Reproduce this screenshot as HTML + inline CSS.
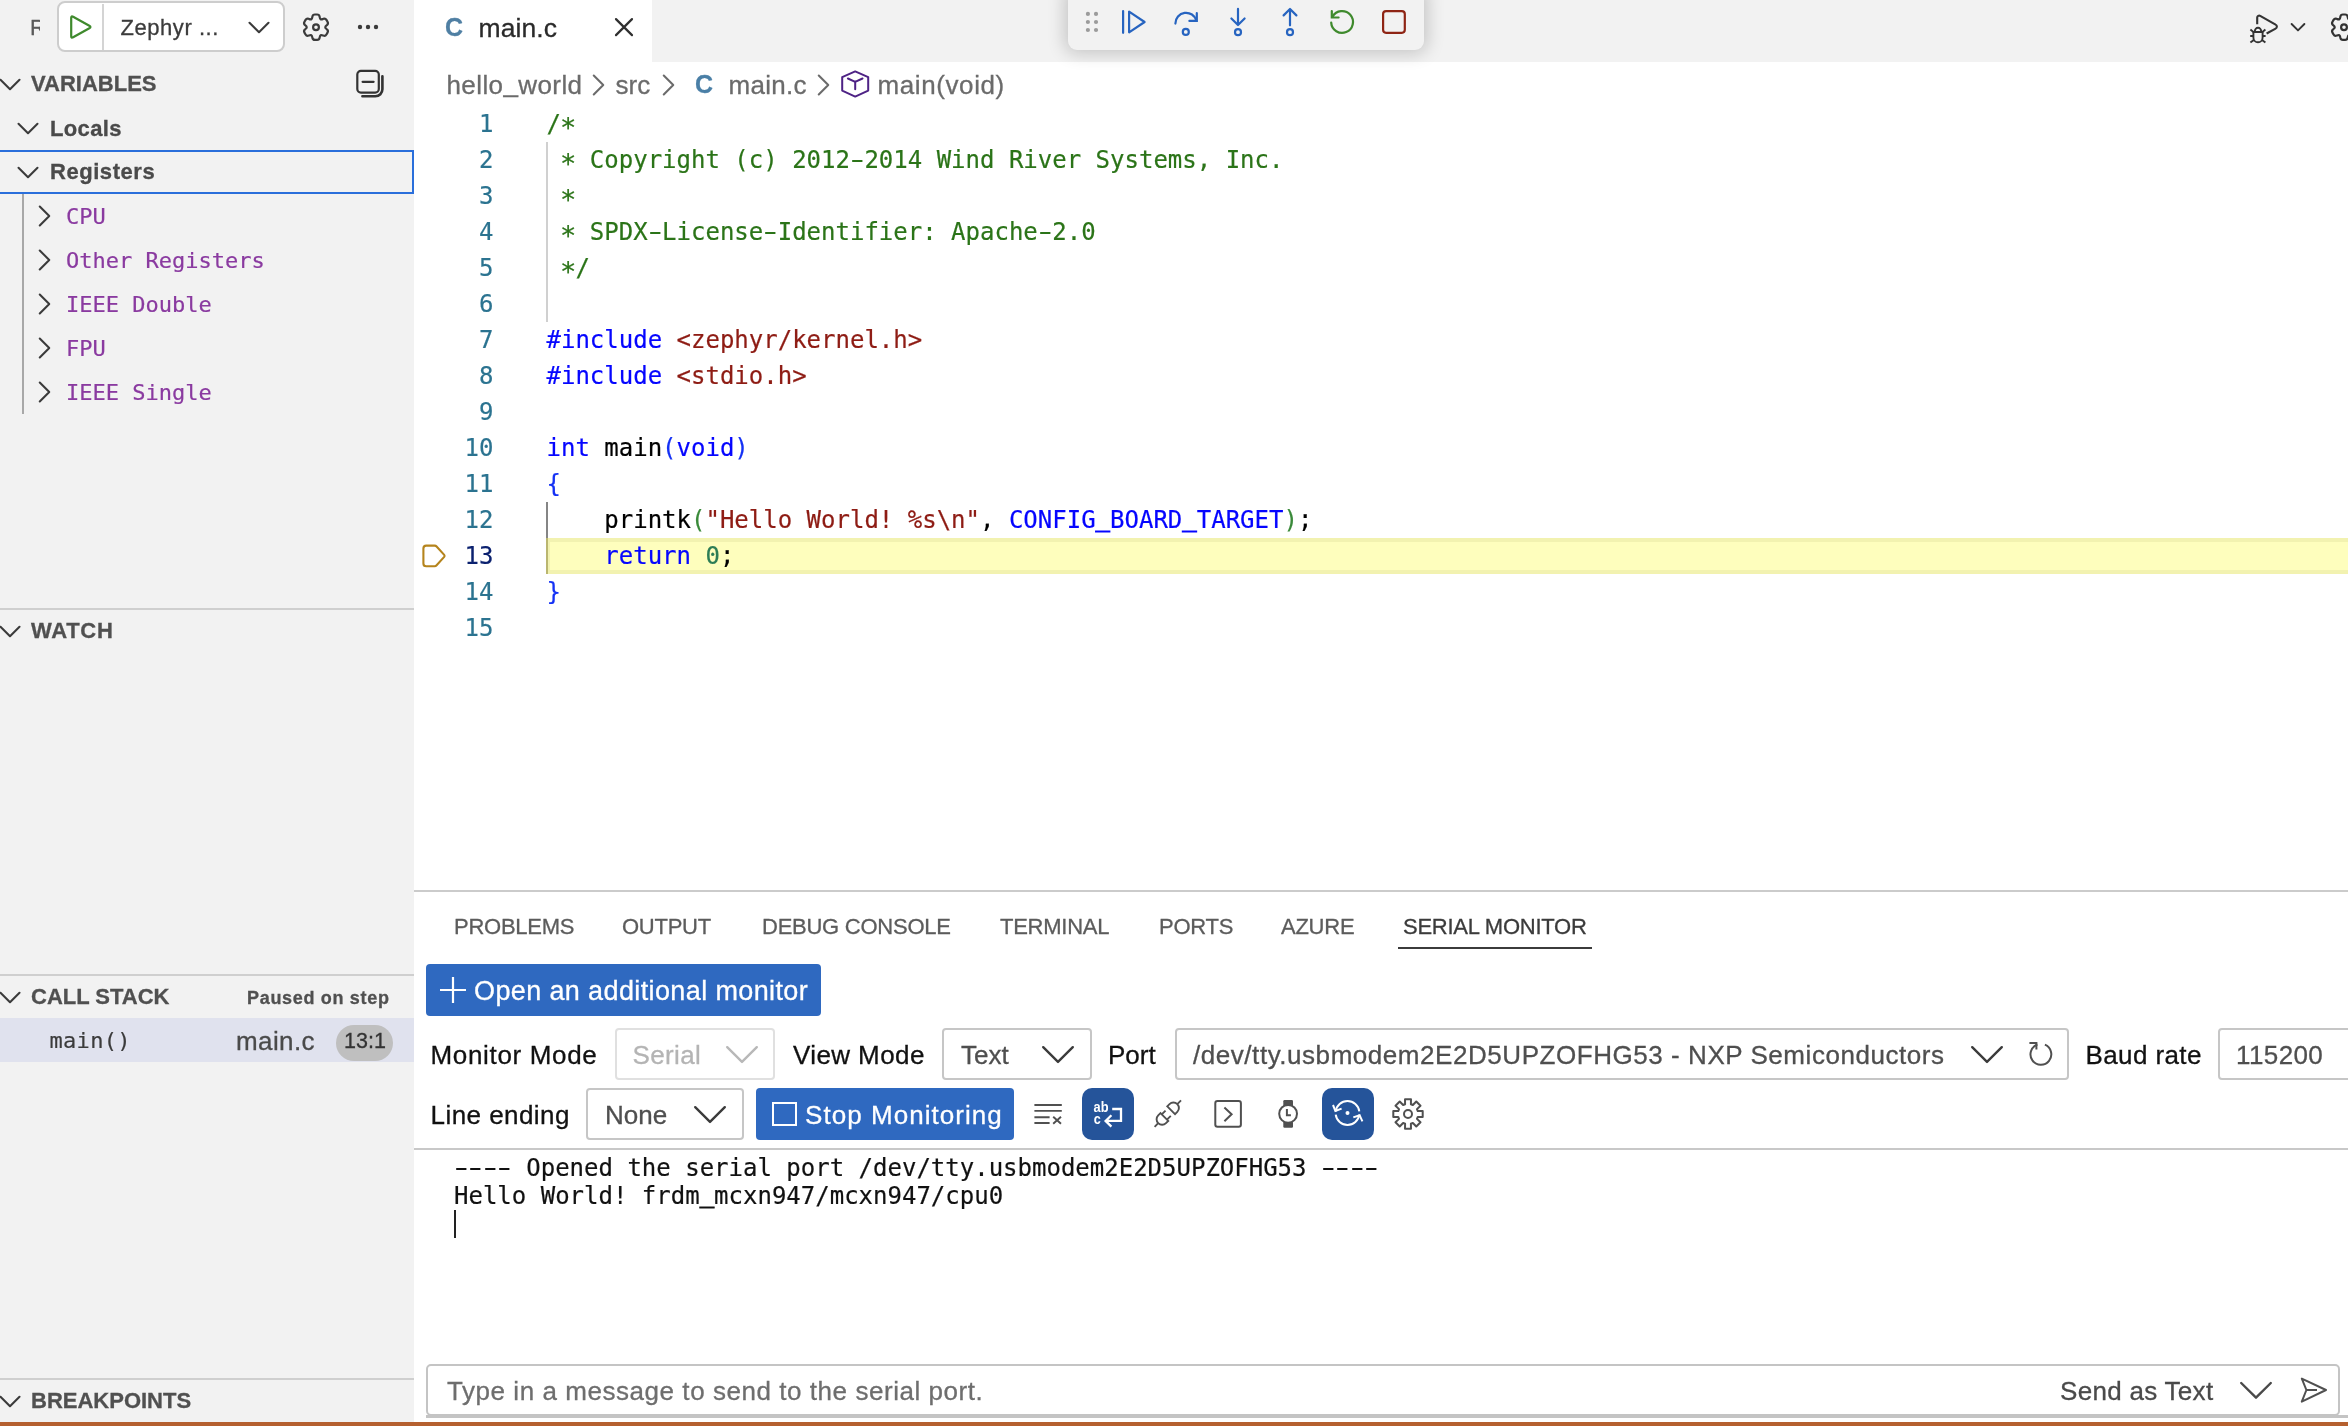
<!DOCTYPE html>
<html lang="en">
<head>
<meta charset="utf-8">
<title>main.c - hello_world - Visual Studio Code</title>
<style>
*{box-sizing:border-box;margin:0;padding:0}
html,body{width:2348px;height:1426px;overflow:hidden;background:#fff}
body{position:relative;font-family:"Liberation Sans",sans-serif;font-size:26px;color:#3b3b3b;-webkit-text-stroke:.3px}
.abs{position:absolute}
.mono{font-family:"DejaVu Sans Mono","Liberation Mono",monospace;-webkit-text-stroke:.2px}
svg{position:absolute;overflow:visible}
.t{position:absolute;white-space:pre;line-height:1}
/* ---------- sidebar ---------- */
#sidebar{position:absolute;left:0;top:0;width:414px;height:1422px;background:#f2f2f2;overflow:hidden}
.hdr{position:absolute;left:31px;font-weight:bold;font-size:22px;color:#505050;line-height:44px;height:44px;white-space:pre}
.sep{position:absolute;left:0;width:414px;height:2px;background:#cfcfcf}
.sub{position:absolute;left:51px;font-weight:bold;font-size:22px;color:#4a4a4a;line-height:44px;height:44px;white-space:pre}
.reg{position:absolute;margin-top:.5px;left:66px;font-size:22px;color:#8a3aa0;line-height:44px;height:44px;white-space:pre}
/* ---------- editor ---------- */
#tabs{position:absolute;left:414px;top:0;width:1934px;height:62px;background:#f2f2f2}
#tab{position:absolute;left:0;top:0;width:238px;height:62px;background:#fff}
#editor{position:absolute;left:414px;top:106px;width:1934px;height:784px;background:#fff;overflow:hidden}
.ln{position:absolute;left:0;width:79.5px;text-align:right;font-size:24px;line-height:36px;height:36px;color:#2b7390}
.cl{position:absolute;left:132.5px;font-size:24px;line-height:36px;height:36px;white-space:pre;color:#000}
.as{display:inline-block;transform:translateY(4.4px) scale(1.13)}.hy{display:inline-block;transform:scaleX(1.62)}.us{display:inline-block;transform:translateY(-2.4px);-webkit-text-stroke:.9px}
.c{color:#2b7418}.k{color:#0505ff}.s{color:#8e1c14}.b1{color:#1431f5}.b2{color:#3a8a3a}.n{color:#2c7d55}.m{color:#0505ff}
/* ---------- panel ---------- */
#panel{position:absolute;left:414px;top:890px;width:1934px;height:532px;background:#fff;border-top:2px solid #cbcbcb;overflow:hidden}
.ptab{position:absolute;margin-top:.5px;top:22px;font-size:22px;letter-spacing:-.25px;line-height:28px;color:#5c5c5c;white-space:pre}
.lbl{position:absolute;font-size:26px;line-height:32px;color:#111;white-space:pre}
.sel{position:absolute;height:52px;border:2px solid #c6c6c6;border-radius:4px;background:#fff}
.sel .v{position:absolute;left:17px;top:9px;font-size:26px;line-height:32px;color:#4f4f4f;white-space:pre}
.btn{position:absolute;background:#2f69c0;border-radius:4px;color:#fff}
.tog{position:absolute;width:52px;height:52px;border-radius:10px;background:#25549a}
.out{position:absolute;left:40px;font-size:24px;line-height:28px;height:28px;color:#111;white-space:pre}
#status{position:absolute;left:0;top:1422px;width:2348px;height:4px;background:#b5602f}
</style>
</head>
<body>
<div id="root" style="position:absolute;left:0;top:0;width:2348px;height:1426px;will-change:transform">
<!-- SIDEBAR -->
<div id="sidebar">
<div class="t" style="left:30px;top:17px;width:10px;overflow:hidden;font-size:22px;color:#5a5a5a">R</div>
<div class="abs" style="left:57px;top:1px;width:228px;height:51px;border:2px solid #cdcdcd;border-radius:8px;background:#fff"></div>
<div class="abs" style="left:102px;top:4px;width:2px;height:46px;background:#d4d4d4"></div>
<svg style="left:0;top:0" width="1" height="1"><path d="M71.20 17.80Q71.20 15.60 73.12 16.67L89.33 25.73Q91.60 27.00 89.33 28.27L73.12 37.33Q71.20 38.40 71.20 36.20Z" fill="none" stroke="#3f8a2d" stroke-width="2.2" stroke-linejoin="round"/></svg>
<div class="t" style="left:120.5px;top:16.5px;font-size:22px;letter-spacing:0.55px;color:#3b3b3b">Zephyr ...</div>
<svg class="abs" style="left:0;top:0" width="1" height="1"><path d="M249.5 22.75L259 32.25L268.5 22.75" fill="none" stroke="#3b3b3b" stroke-width="2.05" stroke-linecap="round" stroke-linejoin="round"/></svg>
<svg class="abs" style="left:0;top:0" width="1" height="1"><path d="M0.5 79.75L10 89.25L19.5 79.75" fill="none" stroke="#3b3b3b" stroke-width="2.05" stroke-linecap="round" stroke-linejoin="round"/></svg>
<div class="hdr" style="top:62px">VARIABLES</div>
<svg style="left:0px;top:0px" width="1" height="1"><path d="M320.63 19.18Q319.93 18.77 319.63 16.79L319.61 16.64Q319.28 14.52 317.08 14.52L314.92 14.52Q312.72 14.52 312.39 16.64L312.37 16.79Q312.07 18.77 311.37 19.18L311.37 19.18Q310.67 19.58 308.80 18.86L308.66 18.80Q306.66 18.02 305.56 19.92L304.48 21.79Q303.38 23.70 305.06 25.04L305.17 25.14Q306.74 26.39 306.74 27.20L306.74 27.20Q306.74 28.01 305.17 29.26L305.06 29.36Q303.38 30.70 304.48 32.61L305.56 34.48Q306.66 36.38 308.66 35.60L308.80 35.54Q310.67 34.82 311.37 35.22L311.37 35.22Q312.07 35.63 312.37 37.61L312.39 37.76Q312.72 39.88 314.92 39.88L317.08 39.88Q319.28 39.88 319.61 37.76L319.63 37.61Q319.93 35.63 320.63 35.22L320.63 35.22Q321.33 34.82 323.20 35.54L323.34 35.60Q325.34 36.38 326.44 34.48L327.52 32.61Q328.62 30.70 326.94 29.36L326.83 29.26Q325.26 28.01 325.26 27.20L325.26 27.20Q325.26 26.39 326.83 25.14L326.94 25.04Q328.62 23.70 327.52 21.79L326.44 19.92Q325.34 18.02 323.34 18.80L323.20 18.86Q321.33 19.58 320.63 19.18Z" fill="none" stroke="#3b3b3b" stroke-width="2.2" stroke-linejoin="round"/><circle cx="316" cy="27.2" r="2.9" fill="none" stroke="#3b3b3b" stroke-width="2.2"/></svg>
<svg style="left:0px;top:0px" width="1" height="1"><circle cx="360" cy="27" r="2.2" fill="#3b3b3b"/><circle cx="368" cy="27" r="2.2" fill="#3b3b3b"/><circle cx="376" cy="27" r="2.2" fill="#3b3b3b"/></svg>
<svg style="left:0px;top:0px" width="1" height="1"><rect x="357.3" y="70.9" width="21.5" height="21.7" rx="3.6" fill="none" stroke="#333" stroke-width="2.2"/><path d="M362.6 81.8H373.6" stroke="#333" stroke-width="2.2" stroke-linecap="round" fill="none"/><path d="M382.4 76.2V89.3A7 7 0 0 1 375.4 96.3H362.4" stroke="#333" stroke-width="2.6" stroke-linecap="round" fill="none"/></svg>
<svg class="abs" style="left:0;top:0" width="1" height="1"><path d="M18.5 123.75L28 133.25L37.5 123.75" fill="none" stroke="#3b3b3b" stroke-width="2.05" stroke-linecap="round" stroke-linejoin="round"/></svg>
<div class="sub" style="top:107px;left:50px;letter-spacing:.35px">Locals</div>
<div class="abs" style="left:-2px;top:150px;width:416px;height:44px;border:2px solid #2a6fdb"></div>
<svg class="abs" style="left:0;top:0" width="1" height="1"><path d="M18.5 167.75L28 177.25L37.5 167.75" fill="none" stroke="#3b3b3b" stroke-width="2.05" stroke-linecap="round" stroke-linejoin="round"/></svg>
<div class="sub" style="top:150px;left:50px;letter-spacing:.55px">Registers</div>
<div class="abs" style="left:22px;top:194px;width:2px;height:220px;background:#a8a8a8"></div>
<svg class="abs" style="left:0;top:0" width="1" height="1"><path d="M39.75 206.5L49.25 216L39.75 225.5" fill="none" stroke="#3b3b3b" stroke-width="2.05" stroke-linecap="round" stroke-linejoin="round"/></svg>
<div class="reg mono" style="top:194px">CPU</div>
<svg class="abs" style="left:0;top:0" width="1" height="1"><path d="M39.75 250.5L49.25 260L39.75 269.5" fill="none" stroke="#3b3b3b" stroke-width="2.05" stroke-linecap="round" stroke-linejoin="round"/></svg>
<div class="reg mono" style="top:238px">Other Registers</div>
<svg class="abs" style="left:0;top:0" width="1" height="1"><path d="M39.75 294.5L49.25 304L39.75 313.5" fill="none" stroke="#3b3b3b" stroke-width="2.05" stroke-linecap="round" stroke-linejoin="round"/></svg>
<div class="reg mono" style="top:282px">IEEE Double</div>
<svg class="abs" style="left:0;top:0" width="1" height="1"><path d="M39.75 338.5L49.25 348L39.75 357.5" fill="none" stroke="#3b3b3b" stroke-width="2.05" stroke-linecap="round" stroke-linejoin="round"/></svg>
<div class="reg mono" style="top:326px">FPU</div>
<svg class="abs" style="left:0;top:0" width="1" height="1"><path d="M39.75 382.5L49.25 392L39.75 401.5" fill="none" stroke="#3b3b3b" stroke-width="2.05" stroke-linecap="round" stroke-linejoin="round"/></svg>
<div class="reg mono" style="top:370px">IEEE Single</div>
<div class="sep" style="top:608px"></div>
<svg class="abs" style="left:0;top:0" width="1" height="1"><path d="M0.5 626.75L10 636.25L19.5 626.75" fill="none" stroke="#3b3b3b" stroke-width="2.05" stroke-linecap="round" stroke-linejoin="round"/></svg>
<div class="hdr" style="top:609px;letter-spacing:.7px">WATCH</div>
<div class="sep" style="top:974px"></div>
<svg class="abs" style="left:0;top:0" width="1" height="1"><path d="M0.5 992.75L10 1002.25L19.5 992.75" fill="none" stroke="#3b3b3b" stroke-width="2.05" stroke-linecap="round" stroke-linejoin="round"/></svg>
<div class="hdr" style="top:975px">CALL STACK</div>
<div class="t" style="left:247px;top:989px;font-size:18px;letter-spacing:.68px;font-weight:bold;color:#505050">Paused on step</div>
<div class="abs" style="left:0;top:1018px;width:414px;height:44px;background:#e0e2ee"></div>
<div class="t mono" style="left:49.5px;top:1030px;font-size:22px;letter-spacing:.3px;color:#3b3b3b">main()</div>
<div class="t" style="left:236px;top:1028px;font-size:26px;letter-spacing:.4px;color:#4a4a4a">main.c</div>
<div class="abs" style="left:336px;top:1025px;width:57px;height:36px;border-radius:18px;background:#bfbfbf"></div>
<div class="t" style="left:344px;top:1031px;font-size:21.5px;color:#333">13:1</div>
<div class="sep" style="top:1378px"></div>
<svg class="abs" style="left:0;top:0" width="1" height="1"><path d="M0.5 1396.75L10 1406.25L19.5 1396.75" fill="none" stroke="#3b3b3b" stroke-width="2.05" stroke-linecap="round" stroke-linejoin="round"/></svg>
<div class="hdr" style="top:1379px">BREAKPOINTS</div>
</div>
<!-- TABS -->
<div id="tabs">
<svg style="left:-414px;top:0px" width="1" height="1"><path d="M2257.2 24.3V17.6A2 2 0 0 1 2260.2 15.9L2275.6 24.6A2.2 2.2 0 0 1 2275.6 28.6L2266.6 33.5" stroke="#333" stroke-width="2.1" stroke-linecap="butt" stroke-linejoin="round" fill="none"/><path d="M2253.4 32H2262.6V37.4A4.6 4.9 0 0 1 2253.4 37.4Z" stroke="#333" stroke-width="1.9" stroke-linejoin="round" fill="none"/><path d="M2254.8 31.6A3.2 3.9 0 0 1 2261.2 31.6" stroke="#333" stroke-width="1.9" fill="none"/><path d="M2250.4 29.6L2253.4 32M2265.4 29.6L2262.4 32M2250.2 36H2253.4M2262.4 36H2265.6M2250.4 42.6L2253.8 40M2265.4 42.6L2262 40" stroke="#333" stroke-width="1.9" fill="none"/></svg>
<svg style="left:-414px;top:0px" width="1" height="1"><path d="M2291.6 24L2298 30.4L2304.4 24" stroke="#333" stroke-width="1.9" stroke-linecap="round" stroke-linejoin="round" fill="none"/></svg>
<svg style="left:-414px;top:0px" width="1" height="1"><path d="M2348.63 19.18Q2347.93 18.77 2347.63 16.79L2347.61 16.64Q2347.28 14.52 2345.08 14.52L2342.92 14.52Q2340.72 14.52 2340.39 16.64L2340.37 16.79Q2340.07 18.77 2339.37 19.18L2339.37 19.18Q2338.67 19.58 2336.80 18.86L2336.66 18.80Q2334.66 18.02 2333.56 19.92L2332.48 21.79Q2331.38 23.70 2333.06 25.04L2333.17 25.14Q2334.74 26.39 2334.74 27.20L2334.74 27.20Q2334.74 28.01 2333.17 29.26L2333.06 29.36Q2331.38 30.70 2332.48 32.61L2333.56 34.48Q2334.66 36.38 2336.66 35.60L2336.80 35.54Q2338.67 34.82 2339.37 35.22L2339.37 35.22Q2340.07 35.63 2340.37 37.61L2340.39 37.76Q2340.72 39.88 2342.92 39.88L2345.08 39.88Q2347.28 39.88 2347.61 37.76L2347.63 37.61Q2347.93 35.63 2348.63 35.22L2348.63 35.22Q2349.33 34.82 2351.20 35.54L2351.34 35.60Q2353.34 36.38 2354.44 34.48L2355.52 32.61Q2356.62 30.70 2354.94 29.36L2354.83 29.26Q2353.26 28.01 2353.26 27.20L2353.26 27.20Q2353.26 26.39 2354.83 25.14L2354.94 25.04Q2356.62 23.70 2355.52 21.79L2354.44 19.92Q2353.34 18.02 2351.34 18.80L2351.20 18.86Q2349.33 19.58 2348.63 19.18Z" fill="none" stroke="#333" stroke-width="2.2" stroke-linejoin="round"/><circle cx="2344" cy="27.2" r="2.9" fill="none" stroke="#333" stroke-width="2.2"/></svg><div id="tab">
<div class="t" style="left:31px;top:14.5px;font-size:25px;font-weight:bold;color:#4f7fa3">C</div>
<div class="t" style="left:64.5px;top:14.5px;font-size:26.5px;letter-spacing:.1px;color:#2a2a2a">main.c</div>
<svg style="left:0;top:0" width="1" height="1"><path d="M202 19.1L218 35.1M218 19.1L202 35.1" fill="none" stroke="#2f2f2f" stroke-width="2.2" stroke-linecap="round"/></svg>
</div></div>
<!-- BREADCRUMBS -->
<div id="crumbs">
<div class="t" style="left:446.5px;top:72px;font-size:26px;letter-spacing:.4px;color:#6b6b6b">hello<span style="display:inline-block;transform:translateY(-2.4px)">_</span>world</div>
<svg class="abs" style="left:0;top:0" width="1" height="1"><path d="M593.75 75.5L603.25 85L593.75 94.5" fill="none" stroke="#6b6b6b" stroke-width="2.05" stroke-linecap="round" stroke-linejoin="round"/></svg>
<div class="t" style="left:615.5px;top:72px;font-size:26px;color:#6b6b6b">src</div>
<svg class="abs" style="left:0;top:0" width="1" height="1"><path d="M663.75 75.5L673.25 85L663.75 94.5" fill="none" stroke="#6b6b6b" stroke-width="2.05" stroke-linecap="round" stroke-linejoin="round"/></svg>
<div class="t" style="left:695px;top:72px;font-size:25px;font-weight:bold;color:#4a7fa6">C</div>
<div class="t" style="left:728.5px;top:72px;font-size:26px;letter-spacing:.3px;color:#6b6b6b">main.c</div>
<svg class="abs" style="left:0;top:0" width="1" height="1"><path d="M818.75 75.5L828.25 85L818.75 94.5" fill="none" stroke="#6b6b6b" stroke-width="2.05" stroke-linecap="round" stroke-linejoin="round"/></svg>
<div class="t" style="left:877.5px;top:72px;font-size:26px;letter-spacing:.6px;color:#6b6b6b">main(void)</div>
</div>
<!-- EDITOR -->
<div id="editor">
<div class="abs" style="left:132px;top:432px;width:1810px;height:36px;background:#fefebd;border:4px solid #f2f2b0"></div>
<div class="abs" style="left:132px;top:36px;width:2px;height:180px;background:#d0d0d0"></div>
<div class="abs" style="left:132px;top:396px;width:2px;height:36px;background:#858585"></div><div class="abs" style="left:132px;top:432px;width:2px;height:36px;background:#bab670"></div>
<div class="ln mono" style="top:0px">1</div><div class="cl mono" style="top:0px"><span class="c">/<span class="as">*</span></span></div>
<div class="ln mono" style="top:36px">2</div><div class="cl mono" style="top:36px"><span class="c"> <span class="as">*</span> Copyright (c) 2012<span class="hy">-</span>2014 Wind River Systems, Inc.</span></div>
<div class="ln mono" style="top:72px">3</div><div class="cl mono" style="top:72px"><span class="c"> <span class="as">*</span></span></div>
<div class="ln mono" style="top:108px">4</div><div class="cl mono" style="top:108px"><span class="c"> <span class="as">*</span> SPDX<span class="hy">-</span>License<span class="hy">-</span>Identifier: Apache<span class="hy">-</span>2.0</span></div>
<div class="ln mono" style="top:144px">5</div><div class="cl mono" style="top:144px"><span class="c"> <span class="as">*</span>/</span></div>
<div class="ln mono" style="top:180px">6</div><div class="cl mono" style="top:180px"></div>
<div class="ln mono" style="top:216px">7</div><div class="cl mono" style="top:216px"><span class="k">#include</span> <span class="s">&lt;zephyr/kernel.h&gt;</span></div>
<div class="ln mono" style="top:252px">8</div><div class="cl mono" style="top:252px"><span class="k">#include</span> <span class="s">&lt;stdio.h&gt;</span></div>
<div class="ln mono" style="top:288px">9</div><div class="cl mono" style="top:288px"></div>
<div class="ln mono" style="top:324px">10</div><div class="cl mono" style="top:324px"><span class="k">int</span> main<span class="b1">(</span><span class="k">void</span><span class="b1">)</span></div>
<div class="ln mono" style="top:360px">11</div><div class="cl mono" style="top:360px"><span class="b1">{</span></div>
<div class="ln mono" style="top:396px">12</div><div class="cl mono" style="top:396px">    printk<span class="b2">(</span><span class="s">"Hello World! %s\n"</span>, <span class="m">CONFIG<span class="us">_</span>BOARD<span class="us">_</span>TARGET</span><span class="b2">)</span>;</div>
<div class="ln mono" style="top:432px;color:#0b216f">13</div><div class="cl mono" style="top:432px">    <span class="k">return</span> <span class="n">0</span>;</div>
<div class="ln mono" style="top:468px">14</div><div class="cl mono" style="top:468px"><span class="b1">}</span></div>
<div class="ln mono" style="top:504px">15</div><div class="cl mono" style="top:504px"></div>
</div>
<div id="glyphs">
<svg style="left:0px;top:0px" width="1" height="1"><path d="M426.2 545.6H434.6Q435.8 545.6 436.6 546.5L444.2 554.9Q445 555.9 444.2 556.9L436.6 565.3Q435.8 566.2 434.6 566.2H426.2Q423.4 566.2 423.4 563.4V548.4Q423.4 545.6 426.2 545.6Z" fill="none" stroke="#b5841c" stroke-width="2.1" stroke-linejoin="round"/></svg>
<svg style="left:0px;top:0px" width="1" height="1"><path d="M855.2 71.4L868.2 77.1V90.6L855.2 96.6L842.2 90.6V77.1Z" fill="none" stroke="#4e2285" stroke-width="2" stroke-linejoin="round"/><path d="M847.9 78.5L855.2 81.8L862.5 78.5M855.2 81.8V89.3" fill="none" stroke="#4e2285" stroke-width="2" stroke-linecap="round" stroke-linejoin="round"/></svg>
</div>
<!-- DEBUG TOOLBAR -->
<div id="dbg">
<div class="abs" style="left:1068px;top:-12px;width:356px;height:62px;background:#f2f2f2;border-radius:9px;box-shadow:0 0 18px 3px rgba(0,0,0,.2)"></div>
<svg style="left:0px;top:0px" width="1" height="1"><circle cx="1087.9" cy="13.9" r="2.1" fill="#9b9b9b"/><circle cx="1087.9" cy="22" r="2.1" fill="#9b9b9b"/><circle cx="1087.9" cy="30" r="2.1" fill="#9b9b9b"/><circle cx="1096" cy="13.9" r="2.1" fill="#9b9b9b"/><circle cx="1096" cy="22" r="2.1" fill="#9b9b9b"/><circle cx="1096" cy="30" r="2.1" fill="#9b9b9b"/></svg>
<svg style="left:0px;top:0px" width="1" height="1"><path d="M1123.1 11.1V32.8" stroke="#2764c0" stroke-width="2.2" stroke-linecap="round" fill="none"/><path d="M1129.1 11.6V32.3L1144.6 22Z" stroke="#2764c0" stroke-width="2.2" stroke-linejoin="round" fill="none"/></svg>
<svg style="left:0px;top:0px" width="1" height="1"><path d="M1175.4 23.6A10.7 10.7 0 0 1 1196.4 20.6" stroke="#2764c0" stroke-width="2.2" stroke-linecap="round" fill="none"/><path d="M1196.8 13.2V20.9H1189.4" stroke="#2764c0" stroke-width="2.2" stroke-linecap="round" stroke-linejoin="miter" fill="none"/><circle cx="1185.8" cy="31.9" r="3" stroke="#2764c0" stroke-width="2.2" fill="none"/></svg>
<svg style="left:0px;top:0px" width="1" height="1"><path d="M1238 8.9V24.6M1231.4 18.5L1238 25L1244.6 18.5" stroke="#2764c0" stroke-width="2.2" stroke-linecap="round" stroke-linejoin="round" fill="none"/><circle cx="1238" cy="32.2" r="3" stroke="#2764c0" stroke-width="2.2" fill="none"/></svg>
<svg style="left:0px;top:0px" width="1" height="1"><path d="M1290 9.5V25.3M1283.6 15.4L1290 9L1296.4 15.4" stroke="#2764c0" stroke-width="2.2" stroke-linecap="round" stroke-linejoin="round" fill="none"/><circle cx="1290" cy="32.2" r="3" stroke="#2764c0" stroke-width="2.2" fill="none"/></svg>
<svg style="left:0px;top:0px" width="1" height="1"><path d="M1332.6 16.6A10.9 10.9 0 1 1 1331.2 22.6" stroke="#3f8a2d" stroke-width="2.2" stroke-linecap="round" fill="none"/><path d="M1331.8 11V17.5H1338.6" stroke="#3f8a2d" stroke-width="2.2" stroke-linecap="round" stroke-linejoin="miter" fill="none"/></svg>
<svg style="left:0px;top:0px" width="1" height="1"><rect x="1383.1" y="11.1" width="21.7" height="21.7" rx="3" fill="none" stroke="#8e2414" stroke-width="2.2"/></svg>
</div>
<!-- PANEL -->
<div id="panel">
<div class="ptab" id="pt0" style="left:40px;top:20px;color:#5c5c5c">PROBLEMS</div>
<div class="ptab" id="pt1" style="left:208px;top:20px;color:#5c5c5c">OUTPUT</div>
<div class="ptab" id="pt2" style="left:348px;top:20px;color:#5c5c5c">DEBUG CONSOLE</div>
<div class="ptab" id="pt3" style="left:586px;top:20px;color:#5c5c5c">TERMINAL</div>
<div class="ptab" id="pt4" style="left:745px;top:20px;color:#5c5c5c">PORTS</div>
<div class="ptab" id="pt5" style="left:867px;top:20px;color:#5c5c5c">AZURE</div>
<div class="ptab" id="pt6" style="left:989px;top:20px;color:#3b3b3b">SERIAL MONITOR</div>
<div class="abs" style="left:984px;top:55px;width:194px;height:2px;background:#3b3b3b"></div>
<div class="btn" style="left:12px;top:72px;width:395px;height:52px"></div>
<svg style="left:-414px;top:-892px" width="1" height="1"><path d="M440 990H466M453 977V1003" stroke="#fff" stroke-width="2.2" fill="none"/></svg>
<div class="t" id="oam" style="left:60px;top:86px;font-size:27px;letter-spacing:.38px;color:#fff">Open an additional monitor</div>
<div class="lbl" id="l1" style="letter-spacing:.67px;left:16.5px;top:147px">Monitor Mode</div>
<div class="sel" style="left:201px;top:136px;width:160px;border-color:#e0e0e0"><div class="v" id="v1" style="left:15.5px;letter-spacing:.35px;color:#b4b4b4">Serial</div></div>
<svg style="left:0;top:0" width="1" height="1"><path d="M313.2 155.2L328 169.9L342.8 155.2" fill="none" stroke="#b8b8b8" stroke-width="2.4" stroke-linecap="round" stroke-linejoin="round"/></svg>
<div class="lbl" id="l2" style="letter-spacing:.4px;left:379px;top:147px">View Mode</div>
<div class="sel" style="left:528px;top:136px;width:150px"><div class="v" id="v2">Text</div></div>
<svg style="left:0;top:0" width="1" height="1"><path d="M629.2 155.2L644 169.9L658.8 155.2" fill="none" stroke="#3b3b3b" stroke-width="2.4" stroke-linecap="round" stroke-linejoin="round"/></svg>
<div class="lbl" id="l3" style="left:694px;top:147px">Port</div>
<div class="sel" style="left:761px;top:136px;width:894px"><div class="v" id="v3" style="left:16px;letter-spacing:.55px">/dev/tty.usbmodem2E2D5UPZOFHG53 - NXP Semiconductors</div></div>
<svg style="left:0;top:0" width="1" height="1"><path d="M1558.2 155.2L1573 169.9L1587.8 155.2" fill="none" stroke="#3b3b3b" stroke-width="2.4" stroke-linecap="round" stroke-linejoin="round"/></svg>
<div class="lbl" id="l4" style="letter-spacing:.4px;left:1671.5px;top:147px">Baud rate</div>
<div class="sel" style="left:1804px;top:136px;width:200px"><div class="v" id="v4" style="left:16px;letter-spacing:.4px">115200</div></div>
<div class="lbl" id="l5" style="letter-spacing:.45px;left:16.5px;top:207px">Line ending</div>
<div class="sel" style="left:172px;top:196px;width:158px"><div class="v" id="v5">None</div></div>
<svg style="left:0;top:0" width="1" height="1"><path d="M281.2 215.2L296 229.9L310.8 215.2" fill="none" stroke="#3b3b3b" stroke-width="2.4" stroke-linecap="round" stroke-linejoin="round"/></svg>
<div class="btn" style="left:342px;top:196px;width:258px;height:52px"></div>
<div class="abs" style="left:358.1px;top:209.8px;width:24.6px;height:24.1px;border:2.5px solid #fff"></div>
<div class="t" id="stm" style="left:391px;top:209.8px;font-size:26px;letter-spacing:1.05px;color:#fff">Stop Monitoring</div>
<div class="tog" style="left:668px;top:196px"></div>
<div class="tog" style="left:908px;top:196px"></div>
<div class="abs" style="left:0;top:256px;width:1934px;height:2px;background:#c8c8c8"></div>
<div class="out mono" style="top:262px"><span class="hy">-</span><span class="hy">-</span><span class="hy">-</span><span class="hy">-</span> Opened the serial port /dev/tty.usbmodem2E2D5UPZOFHG53 <span class="hy">-</span><span class="hy">-</span><span class="hy">-</span><span class="hy">-</span></div>
<div class="out mono" style="top:290px">Hello World! frdm<span class="us">_</span>mcxn947/mcxn947/cpu0</div>
<div class="abs" style="left:40px;top:318px;width:2px;height:28px;background:#222"></div>
<div class="abs" style="left:12px;top:472px;width:1914px;height:52px;border:2px solid #c4c4c4;border-radius:5px;background:#fff"></div>
<div class="abs" style="left:12px;top:523px;width:1922px;height:3px;background:#c4c4c4"></div>
<div class="t" id="ph" style="letter-spacing:.55px;left:33px;top:486px;font-size:26px;color:#6e6e6e">Type in a message to send to the serial port.</div>
<div class="t" id="sat" style="letter-spacing:.3px;left:1646px;top:486px;font-size:26px;color:#4a4a4a">Send as Text</div>
<svg style="left:0;top:0" width="1" height="1"><path d="M1827.2 491L1842 505.7L1856.8 491" fill="none" stroke="#4a4a4a" stroke-width="2.4" stroke-linecap="round" stroke-linejoin="round"/></svg>
<svg style="left:-414px;top:-892px" width="1" height="1"><path d="M1034.4 1105H1061.8M1034.4 1110.9H1061.8M1034.4 1117.2H1049.6M1034.4 1123H1049.6M1053.2 1116.7L1061 1123.8M1061 1116.7L1053.2 1123.8" fill="none" stroke="#505050" stroke-width="1.9"/></svg>
<svg style="left:-414px;top:-892px" width="1" height="1"><text x="1093.6" y="1112.2" font-family="Liberation Sans, sans-serif" font-weight="bold" font-size="15.5" fill="#fff" textLength="15" lengthAdjust="spacingAndGlyphs">ab</text><text x="1093.8" y="1123.8" font-family="Liberation Sans, sans-serif" font-weight="bold" font-size="15.5" fill="#fff" textLength="7" lengthAdjust="spacingAndGlyphs">c</text><path d="M1112.2 1109H1121V1120.9H1106.6M1111.4 1115.2L1105.6 1120.9L1111.4 1126.6" fill="none" stroke="#fff" stroke-width="2.3" stroke-linejoin="miter"/></svg>
<svg style="left:-414px;top:-892px" width="1" height="1"><g transform="translate(1167.75 1113.65) rotate(-45)" fill="none" stroke="#505050" stroke-width="1.9" stroke-linecap="butt"><path d="M-18.6 0H-13.5"/><path d="M-4.8 -5.5H-8A5.5 5.5 0 0 0 -8 5.5H-4.8Z" stroke-linejoin="miter"/><path d="M-4.8 -3.7H0.6M-4.8 3.7H0.6"/><path d="M4.8 -5.5H8A5.5 5.5 0 0 1 8 5.5H4.8Z" stroke-linejoin="miter"/><path d="M13.5 0H18.8"/></g></svg>
<svg style="left:-414px;top:-892px" width="1" height="1"><rect x="1215.3" y="1101.1" width="25.6" height="25.7" rx="2.2" fill="none" stroke="#505050" stroke-width="2"/><path d="M1224.4 1107.6L1231.6 1114.3L1224.4 1121.2" fill="none" stroke="#505050" stroke-width="2"/></svg>
<svg style="left:-414px;top:-892px" width="1" height="1"><rect x="1283.3" y="1100.1" width="9.7" height="6.4" rx="1.2" fill="#505050"/><rect x="1283.3" y="1121.4" width="9.7" height="6.4" rx="1.2" fill="#505050"/><circle cx="1288.1" cy="1113.8" r="8.9" fill="#fff" stroke="#505050" stroke-width="2"/><path d="M1286.9 1109.1V1115.3H1290.9" fill="none" stroke="#505050" stroke-width="2"/></svg>
<svg style="left:-414px;top:-892px" width="1" height="1"><path d="M1359.3 1111.3A11.9 11.9 0 0 0 1335.7 1111.3" fill="none" stroke="#fff" stroke-width="2"/><path d="M1335.7 1114.7A11.9 11.9 0 0 0 1359.3 1114.7" fill="none" stroke="#fff" stroke-width="2"/><path d="M1333 1105L1335.4 1110.9L1341.6 1108.6" fill="none" stroke="#fff" stroke-width="2"/><path d="M1353.3 1117.4L1359.6 1115.2L1362.4 1121.4" fill="none" stroke="#fff" stroke-width="2"/><circle cx="1347.5" cy="1113" r="2" fill="#fff"/></svg>
<svg style="left:-414px;top:-892px" width="1" height="1"><path d="M1410.90 1104.22L1410.99 1099.30L1405.01 1099.30L1405.10 1104.22L1403.13 1105.04L1399.72 1101.49L1395.49 1105.72L1399.04 1109.13L1398.22 1111.10L1393.30 1111.01L1393.30 1116.99L1398.22 1116.90L1399.04 1118.87L1395.49 1122.28L1399.72 1126.51L1403.13 1122.96L1405.10 1123.78L1405.01 1128.70L1410.99 1128.70L1410.90 1123.78L1412.87 1122.96L1416.28 1126.51L1420.51 1122.28L1416.96 1118.87L1417.78 1116.90L1422.70 1116.99L1422.70 1111.01L1417.78 1111.10L1416.96 1109.13L1420.51 1105.72L1416.28 1101.49L1412.87 1105.04Z" fill="none" stroke="#505050" stroke-width="2" stroke-linejoin="round"/><circle cx="1408" cy="1114" r="4" fill="none" stroke="#505050" stroke-width="2"/></svg>
<svg style="left:-414px;top:-892px" width="1" height="1"><path d="M2037.4 1044.5A10.4 10.4 0 1 0 2044.9 1044.7" fill="none" stroke="#505050" stroke-width="2"/><path d="M2029.4 1043H2036.4V1049.6" fill="none" stroke="#505050" stroke-width="2"/></svg>
<svg style="left:-414px;top:-892px" width="1" height="1"><path d="M2301.8 1378.6L2326 1390L2301.8 1401.6L2306.4 1390ZM2306.4 1390H2317" fill="none" stroke="#505050" stroke-width="2" stroke-linejoin="round"/></svg>
</div>
<div id="status"></div>
</div>
</body>
</html>
